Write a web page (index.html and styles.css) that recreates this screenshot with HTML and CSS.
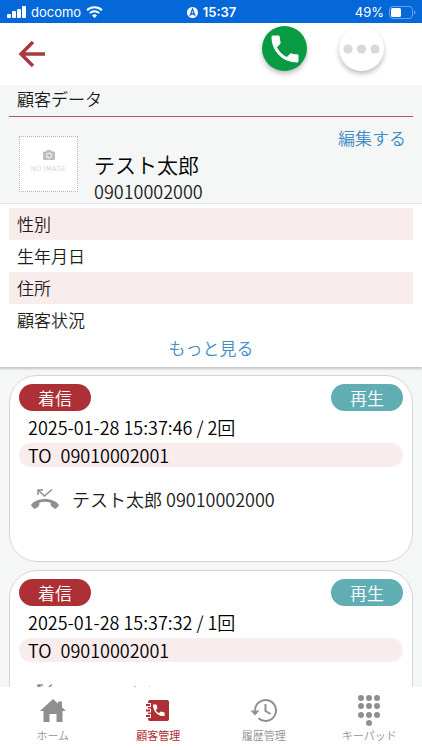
FILE: index.html
```html
<!DOCTYPE html>
<html lang="ja">
<head>
    <meta charset="UTF-8">
    <meta name="viewport" content="width=device-width, initial-scale=1.0">
    <title>顧客データ</title>
    <link rel="stylesheet" href="styles.css">
</head>
<body>
    <div class="status">
        <div class="status-left">
            <svg width="19" height="12" viewBox="0 0 19 12" fill="#fff">
                <rect x="0" y="8" width="4" height="4" rx="1"/>
                <rect x="5" y="5" width="4" height="7" rx="1"/>
                <rect x="10" y="3" width="4" height="9" rx="1"/>
                <rect x="15" y="0" width="4" height="12" rx="1"/>
            </svg>
            <span class="carrier">docomo</span>
            <svg width="17" height="12" viewBox="0 0 17 12" fill="none" stroke="#fff" stroke-width="2">
                <path d="M1 4.3a10.8 10.8 0 0 1 15 0M3.8 7.1a6.8 6.8 0 0 1 9.4 0"/>
                <path d="M8.500 12L6 9.400a3.600 3.600 0 0 1 5 0z" fill="#fff" stroke="none"/>
            </svg>
        </div>
        <div class="status-time">
            <svg width="11" height="11" viewBox="0 0 11 11">
                <circle cx="5.500" cy="5.500" r="5.500" fill="#fff"/>
                <path d="M5.500 2L3.300 8l2.200-1.500L7.700 8z" fill="none" stroke="#0568d9" stroke-width="1.200"/>
            </svg>
            <span>15:37</span>
        </div>
        <div class="status-right">
            <span>49%</span>
            <svg width="27" height="13" viewBox="0 0 27 13">
                <rect x=".5" y=".5" width="23" height="12" rx="3.500" fill="none" stroke="#69a4e8"/>
                <rect x="2" y="2" width="10" height="9" rx="1.500" fill="#fff"/>
                <path d="M25 4.500c2 .6 2 3.400 0 4z" fill="#69a4e8"/>
            </svg>
        </div>
    </div>

    <header class="topbar">
        <button class="back" aria-label="戻る">
            <svg width="28" height="26" viewBox="0 0 28 26" fill="none" stroke="#a9393f" stroke-width="3.500">
                <path d="M27 13H3M15 1L3 13l12 12"/>
            </svg>
        </button>
        <button class="round call" aria-label="発信">
            <svg width="36" height="36" viewBox="0 0 24 24" fill="#fff">
                <path d="M6.620 10.790c1.440 2.830 3.760 5.140 6.590 6.590l2.200-2.200c.27-.27.67-.36 1.020-.24 1.120.37 2.330.57 3.570.57.550 0 1 .45 1 1V20c0 .55-.45 1-1 1C10.610 21 3 13.390 3 4c0-.55.450-1 1-1h3.500c.55 0 1 .45 1 1 0 1.250.2 2.450.57 3.570.11.35.03.74-.25 1.020z"/>
            </svg>
        </button>
        <button class="round more" aria-label="メニュー">
            <svg width="37" height="10" viewBox="0 0 37 10" fill="#d9d9d9">
                <circle cx="5" cy="5" r="4.600"/>
                <circle cx="18.500" cy="5" r="4.600"/>
                <circle cx="32" cy="5" r="4.600"/>
            </svg>
        </button>
    </header>

    <main>
        <section class="customer">
            <h1>顧客データ</h1>
            <div class="profile">
                <div class="photo">
                    <svg width="12" height="10" viewBox="0 0 12 10">
                        <path d="M1 1.500h2L4 0h4l1 1.500h2a1 1 0 0 1 1 1V9a1 1 0 0 1-1 1H1a1 1 0 0 1-1-1V2.500a1 1 0 0 1 1-1z" fill="#bdbdbd"/>
                        <circle cx="6" cy="5.500" r="2.500" fill="#bdbdbd" stroke="#fff"/>
                    </svg>
                    <span>NO IMAGE</span>
                </div>
                <div class="who">
                    <h2>テスト太郎</h2>
                    <p>09010002000</p>
                </div>
                <button class="textlink edit">編集する</button>
            </div>
        </section>

        <section class="details">
            <dl>
                <div><dt>性別</dt><dd></dd></div>
                <div><dt>生年月日</dt><dd></dd></div>
                <div><dt>住所</dt><dd></dd></div>
                <div><dt>顧客状況</dt><dd></dd></div>
            </dl>
            <button class="textlink">もっと見る</button>
        </section>

        <section class="calls">
            <article class="card">
                <div class="card-head">
                    <span class="pill">着信</span>
                    <button class="pill play">再生</button>
                </div>
                <p class="date">2025-01-28 15:37:46 / 2回</p>
                <p class="to"><span>TO</span><span>09010002001</span></p>
                <div class="caller">
                    <svg width="28" height="22" viewBox="0 0 28 22" fill="#8f8f8f">
                        <path d="M7 7V2h5M7 2l6.500 6L21 1.500" fill="none" stroke="#8f8f8f" stroke-width="1.500"/>
                        <path d="M14 11C8 11 3.300 13.200 .6 16.200c-.6.7-.6 1.300 0 1.900l2.200 2.300c.6.6 1.200.6 1.800.1l3-2.200c.5-.4.7-.9.7-1.500v-2.100c3.600-1.200 7.800-1.200 11.400 0v2.100c0 .6.200 1.100.7 1.500l3 2.200c.6.500 1.200.5 1.800-.1l2.200-2.300c.6-.6.6-1.200 0-1.900C24.700 13.200 20 11 14 11z"/>
                    </svg>
                    <span>テスト太郎 09010002000</span>
                </div>
            </article>
            <article class="card">
                <div class="card-head">
                    <span class="pill">着信</span>
                    <button class="pill play">再生</button>
                </div>
                <p class="date">2025-01-28 15:37:32 / 1回</p>
                <p class="to"><span>TO</span><span>09010002001</span></p>
                <div class="caller">
                    <svg width="28" height="22" viewBox="0 0 28 22" fill="#8f8f8f">
                        <path d="M7 7V2h5M7 2l6.500 6L21 1.500" fill="none" stroke="#8f8f8f" stroke-width="1.500"/>
                        <path d="M14 11C8 11 3.300 13.200 .6 16.200c-.6.7-.6 1.300 0 1.900l2.200 2.300c.6.6 1.200.6 1.800.1l3-2.200c.5-.4.7-.9.7-1.500v-2.100c3.600-1.200 7.800-1.200 11.400 0v2.100c0 .6.200 1.100.7 1.500l3 2.200c.6.500 1.200.5 1.800-.1l2.200-2.300c.6-.6.6-1.200 0-1.900C24.700 13.200 20 11 14 11z"/>
                    </svg>
                    <span>テスト太郎 09010002000</span>
                </div>
            </article>
        </section>
    </main>

    <nav class="tabs">
        <a href="#home">
            <svg width="26" height="32" viewBox="0 0 26 32" fill="#8f8f8f">
                <path d="M13 4L0 16h3.500v11h6v-8h7v8h6V16H26l-4-3.700V6.500h-4v2.100z"/>
            </svg>
            ホーム
        </a>
        <a href="#customers" class="active">
            <svg width="28" height="32" viewBox="0 0 28 32">
                <rect x="4" y="5" width="21" height="21" rx="2" fill="#ad3036"/>
                <path d="M1 10h6M1 15.500h6M1 21h6" stroke="#fff" stroke-width="4"/>
                <path d="M2 10h4M2 15.500h4M2 21h4" stroke="#ad3036" stroke-width="2"/>
                <path d="M9 9.500h3.500l.9 4-1.700 1.500c.8 1.500 1.900 2.500 3.300 3.200l1.600-1.600 4 .9v3.600C13.800 21.500 9 16.500 9 9.500z" fill="#fff"/>
            </svg>
            顧客管理
        </a>
        <a href="#history">
            <svg width="28" height="32" viewBox="0 0 28 32" fill="none" stroke="#8f8f8f" stroke-width="2">
                <path d="M5 15.500a10.500 10.500 0 1 1 3.500 7.800"/>
                <path d="M15.500 9v7l5 3"/>
                <path d="M.5 15.500h9L5 20.500z" fill="#8f8f8f" stroke="none"/>
            </svg>
            履歴管理
        </a>
        <a href="#keypad">
            <svg width="24" height="32" viewBox="0 0 24 32" fill="#8f8f8f">
                <circle cx="4" cy="3" r="3"/><circle cx="12" cy="3" r="3"/><circle cx="20" cy="3" r="3"/>
                <circle cx="4" cy="11" r="3"/><circle cx="12" cy="11" r="3"/><circle cx="20" cy="11" r="3"/>
                <circle cx="4" cy="20" r="3"/><circle cx="12" cy="20" r="3"/><circle cx="20" cy="20" r="3"/>
                <circle cx="12" cy="28" r="3"/>
            </svg>
            キーパッド
        </a>
    </nav>
</body>
</html>
```

FILE: styles.css
```css
*{
    box-sizing: border-box;
}
body{
    margin: 0;
    height: 100vh;
    display: flex;
    flex-direction: column;
    background-color: #f5f7f7;
    color: #1c1c1c;
    font-family: "Noto Sans CJK JP", sans-serif;
    font-size: 17px;
    font-weight: 350;
    line-height: 24px;
}
h1, h2, p, dl, dd{
    margin: 0;
    font-weight: inherit;
}
button{
    border: none;
    padding: 0;
    background: none;
    font: inherit;
    cursor: pointer;
}
svg{
    flex: none;
}

/* status bar */
.status{
    flex: none;
    display: grid;
    grid-template-columns: 1fr auto 1fr;
    align-items: center;
    height: 23px;
    padding: 0 6px 0 7px;
    background-color: #0568d9;
    color: white;
    font-family: Inter, sans-serif;
    font-size: 13px;
    font-weight: 400;
}
.status-left, .status-time, .status-right{
    display: flex;
    align-items: center;
    gap: 5px;
}
.status-time{
    font-weight: 600;
}
.status-right{
    justify-content: flex-end;
}

/* header */
.topbar{
    flex: none;
    display: flex;
    align-items: flex-start;
    gap: 32px;
    height: 62px;
    padding: 3px 38px 0 18px;
    background-color: white;
}
.back{
    display: flex;
    margin: 15px auto 0 0;
}
.round{
    display: flex;
    align-items: center;
    justify-content: center;
    width: 45px;
    height: 45px;
    border-radius: 50%;
    box-shadow: 0 3px 5px rgba(0, 0, 0, 0.25);
}
.call{
    background-color: #079b44;
}
.more{
    background-color: white;
}

main{
    flex: 1;
    min-height: 0;
    overflow-y: auto;
    scrollbar-width: none;
}

/* customer */
.customer{
    padding: 2px 9px 0;
}
.customer h1{
    padding: 0 8px 5px;
    border-bottom: 1px solid #b0565a;
    font-size: 17px;
}
.profile{
    display: flex;
    align-items: flex-start;
    padding: 9px 7px 0 10px;
}
.photo{
    display: flex;
    flex-direction: column;
    align-items: center;
    justify-content: center;
    width: 59px;
    height: 56px;
    margin-top: 10px;
    border: 1px dotted #b5b5b5;
    background-color: white;
    color: #b5b5b5;
    font-family: "DejaVu Sans", sans-serif;
    font-size: 7px;
    line-height: 18px;
}
.who{
    margin: 23px auto 0 16px;
}
.who h2{
    font-size: 21px;
    line-height: 30px;
    color: black;
}
.who p, .date, .to, .caller{
    font-size: 18px;
}
.textlink{
    color: #3f8cc8;
}

/* details */
.details{
    padding: 4px 9px 7px;
    border-top: 1px solid #e0e2e2;
    background-color: white;
    box-shadow: 0 2px 2px rgba(0, 0, 0, 0.2);
    text-align: center;
}
.details dl div{
    display: flex;
    padding: 4px 8px;
}
.details dl div:nth-child(odd){
    background-color: #f9ecec;
}

/* call history */
.calls{
    display: grid;
    gap: 8px;
    padding: 8px 9px;
}
.card{
    min-height: 187px;
    padding: 8px 9px;
    border: 1px solid #d5d5d5;
    border-radius: 28px;
    background-color: white;
}
.card-head{
    display: flex;
    justify-content: space-between;
}
.pill{
    width: 72px;
    border-radius: 14px;
    background-color: #ad3036;
    color: white;
    line-height: 27px;
    text-align: center;
}
.play{
    background-color: #60adb3;
}
.date{
    padding: 4px 9px 4px;
    color: black;
}
.to{
    display: flex;
    gap: 9px;
    padding: 0 9px;
    border-radius: 12px;
    background-color: #f9ecec;
    color: black;
}
.caller{
    display: flex;
    align-items: center;
    gap: 13px;
    padding: 20px 12px 0;
}

/* bottom tabs */
.tabs{
    flex: none;
    display: grid;
    grid-template-columns: repeat(4, 1fr);
    height: 63px;
    padding-top: 8px;
    background-color: white;
}
.tabs a{
    display: flex;
    flex-direction: column;
    align-items: center;
    color: #8f8f8f;
    font-size: 11px;
    line-height: 16px;
    text-decoration: none;
}
.tabs .active{
    color: #ad3036;
    font-weight: 400;
}
```
